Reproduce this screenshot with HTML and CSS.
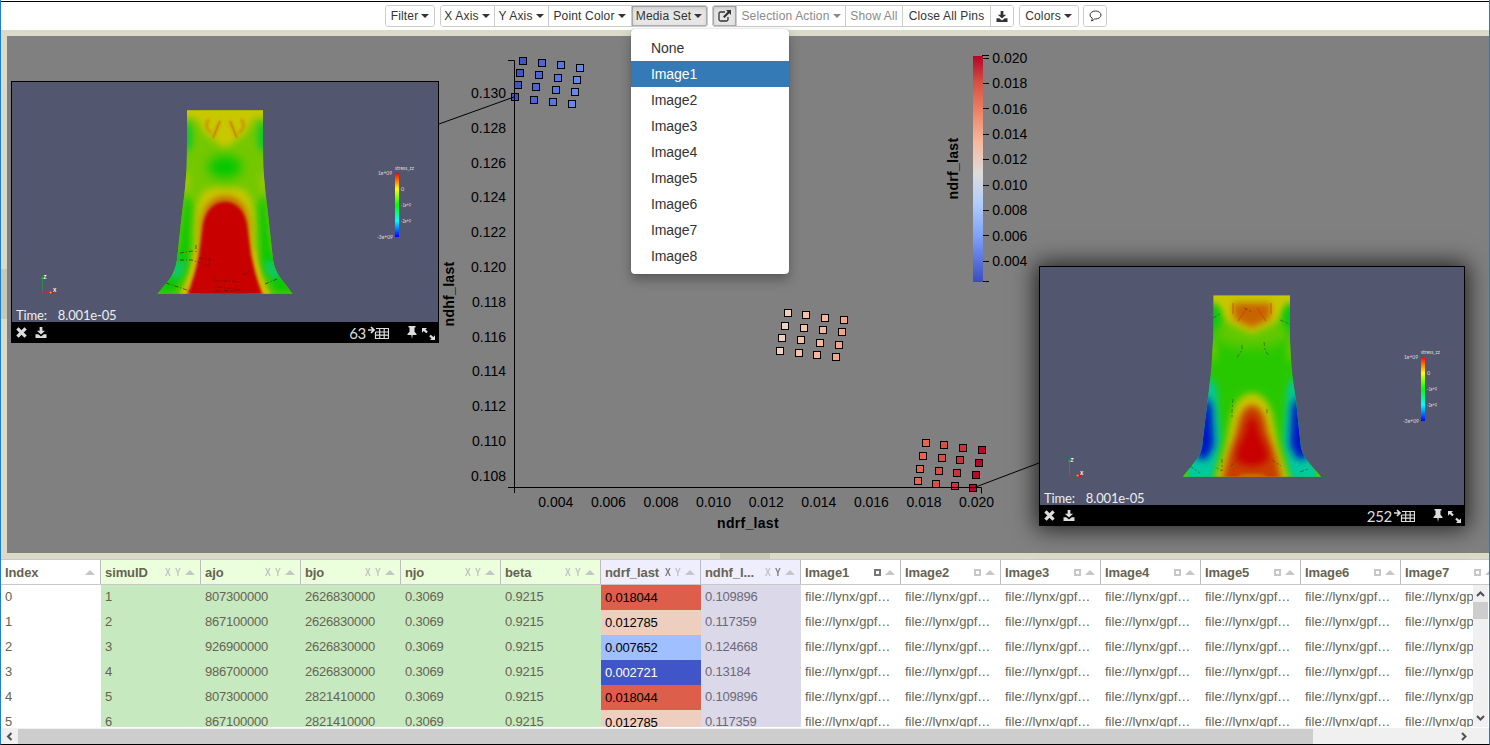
FILE: index.html
```html
<!DOCTYPE html>
<html lang="en">
<head>
<meta charset="utf-8">
<title>Ensemble Explorer</title>
<link rel="stylesheet" href="styles.css">
</head>
<body>
<svg class="defs" width="0" height="0">
  <defs>
    <symbol id="i-download" viewBox="0 0 12 12"><path fill="currentColor" d="M4.500 0h3v4h3L6 8.300 1.500 4h3zM0 8h3l3 2.300L9 8h3v4H0z"/></symbol>
    <symbol id="i-close" viewBox="0 0 10 10"><path d="M1.300 1.300l7.400 7.400M8.700 1.300L1.300 8.700" stroke="currentColor" stroke-width="3"/></symbol>
    <symbol id="i-table" viewBox="0 0 21 13"><path d="M0 4h5M3 1l3 3-3 3" fill="none" stroke="currentColor" stroke-width="1.700"/><path d="M8 2.500h12.500v10H7.500V6M7.500 6h13M7.500 9.200h13M11.700 2.500v10M16.200 2.500v10" fill="none" stroke="currentColor" stroke-width="1.200"/></symbol>
    <symbol id="i-pin" viewBox="0 0 10 13"><path fill="currentColor" d="M1.500 0h7v1.500h-1v4.300L9.500 8v1H5.700L5 13l-.7-4H.5V8l2-2.200V1.500h-1z"/></symbol>
    <symbol id="i-expand" viewBox="0 0 13 12"><path fill="currentColor" d="M0 0h5L3.500 1.500l2.300 2.300-1.500 1.500L1.700 3 0 4.700zM13 12H8l1.500-1.500-2.300-2.300 1.500-1.500L11.300 9 13 7.300z"/></symbol>
    <symbol id="legend" viewBox="0 0 44 76">
      <rect x="20" y="9" width="4" height="64" fill="url(#jet)"/>
      <g class="tiny"><text x="20" y="6" textLength="19" lengthAdjust="spacingAndGlyphs">stress_zz</text><text x="3" y="11" textLength="14" lengthAdjust="spacingAndGlyphs">1e+09</text><text x="26" y="27">0</text><text x="26" y="43" textLength="10" lengthAdjust="spacingAndGlyphs">-1e+9</text><text x="26" y="59" textLength="10" lengthAdjust="spacingAndGlyphs">-2e+9</text><text x="2" y="75" textLength="16" lengthAdjust="spacingAndGlyphs">-3e+09</text></g>
    </symbol>
    <symbol id="triad" viewBox="0 0 18 22">
      <path d="M2.500 4v14" stroke="#2d8b50"/><path d="M2.500 18.500h8" stroke="#a03848"/><path d="M.8 5l1.700-3 1.700 3z" fill="#00c800"/><circle cx="12.500" cy="18.500" r="1.700" fill="#e01010"/><circle cx="10.700" cy="18.500" r="1.100" fill="#dcb400"/>
      <g class="axis-name"><text x="3.500" y="5">Z</text><text x="13" y="18">X</text></g>
    </symbol>
    <linearGradient id="jet" x2="0" y2="1"><stop stop-color="#f00"/><stop offset=".25" stop-color="#ff0"/><stop offset=".5" stop-color="#0f0"/><stop offset=".75" stop-color="#0ff"/><stop offset="1" stop-color="#00f"/></linearGradient>
    <linearGradient id="coolwarm" x2="0" y2="1"><stop stop-color="#b40426"/><stop offset=".12" stop-color="#d65244"/><stop offset=".25" stop-color="#ee8468"/><stop offset=".38" stop-color="#f7b89c"/><stop offset=".52" stop-color="#dddcdc"/><stop offset=".65" stop-color="#b3cdfb"/><stop offset=".8" stop-color="#7da0f9"/><stop offset="1" stop-color="#3b4cc0"/></linearGradient>
    <filter id="b2" x="-50%" y="-50%" width="200%" height="200%"><feGaussianBlur stdDeviation="1.500"/></filter>
    <filter id="b4" x="-50%" y="-50%" width="200%" height="200%"><feGaussianBlur stdDeviation="3.500"/></filter>
    <filter id="b7" x="-60%" y="-60%" width="220%" height="220%"><feGaussianBlur stdDeviation="6"/></filter>
  </defs>
</svg>
<div class="window">
  <header class="toolbar">
    <div class="group"><button class="btn w-filter">Filter<i class="caret"></i></button></div>
    <div class="group">
      <button class="btn w-axis">X Axis<i class="caret"></i></button><button class="btn w-axis">Y Axis<i class="caret"></i></button><button class="btn w-color">Point Color<i class="caret"></i></button><button class="btn w-media active">Media Set<i class="caret"></i></button>
    </div>
    <div class="group">
      <button class="btn w-icon active"><svg width="13" height="12" viewBox="0 0 13 12"><path d="M7 2H2.500Q1 2 1 3.500v6Q1 11 2.500 11h6Q10 11 10 9.500V7" fill="none" stroke="currentColor" stroke-width="1.300"/><path d="M8 0h5v5l-1.700-1.700L6.500 8 5 6.500l4.700-4.800z" fill="currentColor"/></svg></button><button class="btn w-select muted">Selection Action<i class="caret"></i></button><button class="btn w-show muted">Show All</button><button class="btn w-pins">Close All Pins</button><button class="btn w-icon"><svg width="12" height="11"><use href="#i-download"/></svg></button>
    </div>
    <div class="group"><button class="btn w-colors">Colors<i class="caret"></i></button></div>
    <div class="group"><button class="btn w-talk"><svg width="13" height="12" viewBox="0 0 13 12"><path d="M6.500 1C9.600 1 12 2.800 12 5s-2.400 4-5.500 4L5.600 8.900Q4.400 10.500 2.200 10.800 3.300 9.500 3.300 8.200 1 7 1 5C1 2.800 3.400 1 6.500 1z" fill="none" stroke="currentColor"/></svg></button></div>
  </header>
  <nav class="menu"><a>None</a><a class="selected">Image1</a><a>Image2</a><a>Image3</a><a>Image4</a><a>Image5</a><a>Image6</a><a>Image7</a><a>Image8</a></nav>

  <main class="workspace">
    <div class="gutter"><i class="grip"></i></div>
    <section class="plot">
      <svg id="chart" class="chart" viewBox="7 36 1482 517"></svg>

      <article class="card card-a">
        <svg class="scene" viewBox="12 82 426 240">
          <clipPath id="shapeA"><path d="M187 110.500H263V140Q263 170 265 188Q270 230 273 260Q275 272 282 280L292.500 293.700H157.500L169 280Q175 272 177 260Q181 220 185 188Q187 170 187 140Z"/></clipPath>
          <g clip-path="url(#shapeA)">
            <path d="M150 100h150v200H150z" fill="#74c800"/>
            <path d="M176 90h98v28h-20l-9 16-20 15-20-15-9-16h-20z" fill="#c8c800" filter="url(#b4)"/>
            <g fill="#00c832" filter="url(#b4)"><ellipse cx="187" cy="137" rx="5" ry="15"/><ellipse cx="263" cy="137" rx="5" ry="15"/></g>
            <ellipse cx="225" cy="167" rx="17" ry="11" fill="#00c800" filter="url(#b7)"/>
            <g fill="#a0c800" filter="url(#b4)"><ellipse cx="185" cy="182" rx="5" ry="10"/><ellipse cx="265" cy="182" rx="5" ry="10"/></g>
            <g fill="#08c800" filter="url(#b4)"><path d="M185 196L192 204 190 260 176 294H150L178 250z"/><path d="M265 196L258 204 260 260 274 294H300L272 250z"/></g>
            <g fill="#10c87a" filter="url(#b4)"><ellipse cx="178" cy="270" rx="5" ry="11" transform="rotate(28 178 270)"/><ellipse cx="272" cy="270" rx="5" ry="11" transform="rotate(-28 272 270)"/></g>
            <path d="M194 300L196 215Q198 190 212 188H238Q252 190 254 215L256 300z" fill="#c8c800" filter="url(#b4)"/>
            <path d="M194 250Q192 276 176 300H274Q258 276 256 250z" fill="#c8bc00" filter="url(#b2)"/>
            <path d="M201 300V224Q204 197 225 196Q246 197 249 224V300z" fill="#c86400" filter="url(#b4)"/>
            <path d="M199 255L203 225Q207 203 225 202Q243 203 247 225L251 255Q255 275 263 296H187Q195 275 199 255z" fill="#c80000" filter="url(#b2)"/>
            <path d="M186 110.500h78" stroke="#c8be00"/>
            <g fill="none" stroke="#c88200" stroke-width="2" filter="url(#b2)"><path d="M220 121l-7 17M230 121l7 17M209 119q-6 7 2 14M241 119q6 7-2 14"/></g>
            <g fill="none" stroke="#c87800" stroke-width="1" opacity=".75"><path d="M220 121l-7 17M230 121l7 17"/></g>
          </g>
          <g fill="none" stroke="#5c1500" stroke-width=".7" stroke-dasharray="4 2 1 2"><path d="M180 253l13-2M180 260h12l8 3M196 245v7M199 258l11 1v6h-7M166 283l24 8M214 280l25 2M218 287l24 3M243 275l8-5M265 284l12-5M215 291l28-1"/></g>
          <use href="#legend" x="375" y="164" width="44" height="76"/><use href="#triad" x="40" y="274" width="18" height="22"/>
        </svg>
        <div class="stamp"><span>Time:</span><span>8.001e-05</span></div>
        <footer class="bar"><svg width="11" height="11"><use href="#i-close"/></svg><svg width="12" height="11"><use href="#i-download"/></svg><b class="count">63</b><svg class="tbl" width="21" height="13"><use href="#i-table"/></svg><svg class="pin" width="10" height="13"><use href="#i-pin"/></svg><svg width="13" height="12"><use href="#i-expand"/></svg></footer>
      </article>

      <article class="card card-b">
        <svg class="scene" viewBox="1040 267 424 238">
          <clipPath id="shapeB"><path d="M1213.500 295.500H1290V340Q1291 372 1296 400Q1299 430 1301 448Q1303 456 1310 464L1321 476.700H1183L1193 464Q1200 456 1202 448Q1205 420 1209 390Q1213 355 1213.500 325Z"/></clipPath>
          <g clip-path="url(#shapeB)">
            <path d="M1170 290h160v200H1170z" fill="#28c800"/>
            <ellipse cx="1252" cy="332" rx="38" ry="16" fill="#64c800" filter="url(#b7)"/>
            <path d="M1200 276h105v28h-19l-8 18-26 12-26-12-8-18h-18z" fill="#c8c800" filter="url(#b4)"/>
            <path d="M1233 303h38l-1 16-18 9-18-9z" fill="#c86400" filter="url(#b4)"/>
            <g fill="#00c81e" filter="url(#b4)"><ellipse cx="1213" cy="318" rx="5" ry="12"/><ellipse cx="1290" cy="318" rx="5" ry="12"/></g>
            <g fill="#70c800" filter="url(#b4)"><ellipse cx="1213" cy="350" rx="4" ry="12"/><ellipse cx="1291" cy="350" rx="4" ry="12"/></g>
            <g fill="#00c8a0" filter="url(#b4)"><path d="M1208 376L1216 385 1221 440 1213 484H1175L1190 460z"/><path d="M1296 376L1288 385 1283 440 1291 484H1329L1312 460z"/></g>
            <g fill="#0014c8" filter="url(#b4)"><path d="M1206 395l6 12 2 38-7 14h-10v-20z"/><path d="M1298 395l-6 12-2 38 7 14h10v-20z"/></g>
            <g fill="#58c800" filter="url(#b2)"><path d="M1188 464l-12 15h12zM1316 464l12 15h-12z"/></g>
            <path d="M1252 393Q1236 394 1231 418L1225 448 1214 482H1290L1279 448 1273 418Q1268 394 1252 393z" fill="#c8c800" filter="url(#b4)"/>
            <path d="M1252 405Q1240 407 1237 430L1227 460 1220 490H1284L1277 460 1267 430Q1264 407 1252 405z" fill="#c83c00" filter="url(#b4)"/>
            <path d="M1252 416Q1256 418 1260 436Q1272 455 1266 462Q1252 470 1238 462Q1232 455 1244 436Q1248 418 1252 416z" fill="#c80000" filter="url(#b4)"/>
            <ellipse cx="1252" cy="476" rx="14" ry="2" fill="#c87800" filter="url(#b2)"/>
            <g fill="none" stroke="#c84600" stroke-width="1.200" opacity=".7"><path d="M1247 308l-9 13M1257 308l9 13M1233 303v11M1271 303v11"/></g>
          </g>
          <g fill="none" stroke="#304000" stroke-width=".7" stroke-dasharray="4 2 2 2" opacity=".8"><path d="M1242 345v5l-6 9M1264 342l1 8 4 6M1213 318l7-4M1280 320l10 4M1233 399l-1 12v8M1267 409v6M1222 459v12l-7-4M1231 466l8-8M1272 460l9 6M1190 466l10 7M1300 472l8-3M1244 308l8 4"/></g>
          <use href="#legend" x="1401" y="348" width="44" height="76"/><use href="#triad" x="1067" y="457" width="18" height="22"/>
        </svg>
        <div class="stamp"><span>Time:</span><span>8.001e-05</span></div>
        <footer class="bar"><svg width="11" height="11"><use href="#i-close"/></svg><svg width="12" height="11"><use href="#i-download"/></svg><b class="count">252</b><svg class="tbl" width="21" height="13"><use href="#i-table"/></svg><svg class="pin" width="10" height="13"><use href="#i-pin"/></svg><svg width="13" height="12"><use href="#i-expand"/></svg></footer>
      </article>
    </section>
  </main>
  <div class="splitter"><i class="grip"></i></div>

  <section class="grid">
    <div id="head" class="row head"></div>
    <div class="scroller">
      <div id="rows" class="rows"></div>
      <div class="vbar"><svg width="15" height="17" viewBox="0 0 15 17"><path d="M4 11l3.500-3.500L11 11" class="arrow"/></svg><i class="vthumb"></i><svg class="down" width="15" height="17" viewBox="0 0 15 17"><path d="M4 6l3.500 3.500L11 6" class="arrow"/></svg></div>
    </div>
    <div class="hbar"><svg width="17" height="15" viewBox="0 0 17 15"><path d="M10.500 4L7 7.500l3.500 3.500" class="arrow"/></svg><i class="hthumb"></i><svg class="right" width="17" height="15" viewBox="0 0 17 15"><path d="M6 4l3.500 3.500L6 11" class="arrow"/></svg></div>
  </section>
</div>
<script src="script.js"></script>
</body>
</html>
```

FILE: styles.css
```css
* { box-sizing: border-box; }
body { margin: 0; background: #fff; font-family: "Liberation Sans", Arial, sans-serif; color: #333; overflow: hidden; }
.defs { position: absolute; }
.window { position: relative; width: 1490px; height: 745px; display: flex; flex-direction: column; border-left: 1px solid #1c7fd6; border-right: 1px solid #1c7fd6; border-bottom: 1px solid #000; }

.toolbar { height: 30px; flex: none; display: flex; gap: 4.500px; padding: 3px 0 0 384px; margin-top: 1px; margin-bottom: -1px; border-top: 1px solid #000; }
.group { display: flex; flex: none; height: 22px; border: 1px solid #ccc; border-radius: 3px; overflow: hidden; }
.btn { display: flex; flex: none; align-items: center; justify-content: center; height: 20px; padding: 0; border: 0; border-left: 1px solid #ccc; background: #fff; color: #333; font: 12px "Liberation Sans", Arial, sans-serif; letter-spacing: .17px; white-space: nowrap; }
.btn:first-child { border-left: 0; }
.btn.active { background: #e6e6e6; box-shadow: inset 0 2px 4px rgba(0,0,0,.14), inset 0 0 0 1px #b4b4b4; }
.btn.muted { color: #8a8a8a; }
.caret { margin-left: 3px; border: 4px solid transparent; border-top-color: currentColor; border-bottom: 0; }
.w-filter { width: 48px; }
.w-axis { width: 54px; }
.w-axis:first-child { width: 53px; }
.w-color { width: 83px; }
.w-media { width: 76px; }
.w-icon { width: 23px; }
.w-talk { width: 22px; }
.w-select { width: 109px; }
.w-show { width: 57px; }
.w-pins { width: 88px; }
.w-colors { width: 58px; }

.menu { position: absolute; z-index: 5; left: 630px; top: 29px; width: 158px; height: 245px; padding: 6px 0; background: #fff; border-radius: 4px; box-shadow: 0 0 1px rgba(0,0,0,.4), 0 6px 12px rgba(0,0,0,.3); }
.menu a { display: block; height: 26px; padding-left: 20px; font-size: 14px; line-height: 26px; letter-spacing: -.1px; }
.menu .selected { background: #337ab7; color: #fff; }

.workspace { display: flex; height: 523px; flex: none; border-top: 6px solid #dadac8; }
.gutter { width: 6px; background: #dadac8; padding-top: 233px; }
.gutter .grip { display: block; height: 50px; background: #c8c8b6; }
.splitter { height: 6px; flex: none; background: #dadac8; }
.splitter .grip { display: block; width: 50px; height: 6px; margin-left: 719px; background: #c8c8b6; }
.plot { position: relative; flex: 1; background: #808080; }
.chart { display: block; width: 1482px; height: 517px; font-size: 14px; }
.chart text { fill: #000; }
.chart .title { font-weight: bold; letter-spacing: .3px; text-anchor: middle; }
.chart .line { stroke: #000; fill: none; }

.card { position: absolute; border: 1px solid #000; background: #52566e; }
.card-a { left: 4px; top: 45px; width: 428px; height: 262px; }
.card-b { left: 1032px; top: 230px; width: 426px; height: 260px; box-shadow: 0 0 22px 3px rgba(0,0,0,.75); }
.scene { display: block; width: 100%; height: calc(100% - 20px); }
.stamp { position: absolute; left: 4px; bottom: 19px; display: flex; gap: 11px; color: #eee; font: 13px/15px "Century Gothic", "URW Gothic", Lato, sans-serif; letter-spacing: -.15px; }
.bar { display: flex; align-items: center; height: 20px; padding: 1px 4px 0; background: #000; color: #ddd; }
.bar svg { flex: none; }
.bar svg:nth-child(2) { margin-left: 8px; }
.count { margin-left: auto; font: 15px "Century Gothic", "URW Gothic", Lato, sans-serif; letter-spacing: -.3px; }
.tbl { margin: 0 18px 0 2px; }
.pin { margin-right: 5px; }
.bar svg:last-child { margin-right: -1px; margin-top: 2px; }
.tiny { font-family: Lato, sans-serif; font-size: 5.500px; fill: #ddd; }
.axis-name { font-size: 5px; font-weight: bold; fill: #fff; }

.grid { width: 1488px; overflow: hidden; border-top: 1px solid #c8c8c8; font-size: 13px; letter-spacing: -.22px; color: #666352; }
.row { display: flex; }
.head { height: 25px; border-bottom: 1px solid #c8c8c8; width: 1500px; }
.th { flex: none; width: 100px; display: flex; align-items: center; padding: 0 5px 0 4px; border-right: 1px solid #bdbdbd; font-weight: bold; letter-spacing: -.1px; }
.th .name { margin-right: auto; }
.th.param { background: #ecffdc; }
.th.result { background: #eeeeff; }
.axis { font-size: 10px; width: 6px; margin-right: 4px; color: #c2c2c2; letter-spacing: 0; transform: scaleX(.86); transform-origin: left; }
.axis.on { color: #777; }
.box { width: 7px; height: 7px; border: 2px solid #c6c6c6; margin-right: 4px; }
.box.on { border-color: #777; }
.up { border: 5px solid transparent; border-top: 0; border-bottom: 5px solid #c6c6c6; }
.scroller { display: flex; height: 143px; border-bottom: 1px solid #fff; }
.rows { width: 1472px; overflow: hidden; }
.td { flex: none; width: 100px; height: 25px; padding-left: 4px; line-height: 23px; white-space: nowrap; }
.td.param { background: #c7e9c0; }
.td.result { background: #dbd8ea; color: #6c6976; }
.td.link { letter-spacing: 0; }
.td.heat { line-height: 25px; color: #000; }
.td.hot { background: #dd5f4b; }
.td.warm { background: #eecfbf; }
.td.cool { background: #9fbfff; }
.td.cold { background: #4055c8; color: #fff; }
.vbar { width: 15px; height: 142px; background: #f0f0f0; display: flex; flex-direction: column; }
.vthumb { height: 17px; background: #cdcdcd; flex: none; }
.down { margin-top: auto; }
.hbar { height: 16px; background: #f0f0f0; display: flex; align-items: center; }
.hthumb { width: 1295px; height: 15px; background: #cdcdcd; }
.right { margin-left: auto; margin-right: 16px; }
.arrow { fill: none; stroke: #505050; stroke-width: 2; }
```

FILE: script.js
```javascript
const clusters = [
  { colors: ['#4055c8', '#4a65d6', '#5577e4', '#6488ec'],
    points: [[523,61],[542,63],[561,65],[580,68],[520,73],[539,75],[558,78],[577,80],[518,85],[536,87],[556,90],[575,92],[515,97],[534,100],[553,102],[572,104]] },
  { colors: ['#f0cfc0', '#f5c1a8', '#f6b79c', '#f4a487'],
    points: [[788,313],[806,315],[825,318],[844,320],[785,326],[804,328],[823,330],[842,332],[782,338],[801,340],[820,343],[839,345],[780,351],[799,353],[817,355],[836,357]] },
  { colors: ['#e6654f', '#d94f42', '#c8343a', '#b40c28'],
    points: [[926,443],[944,445],[963,448],[982,450],[923,456],[942,458],[960,460],[979,463],[920,469],[939,471],[957,473],[976,475],[918,481],[936,484],[955,486],[973,488]] }
];
let chart = '';
for (const c of clusters) {
  c.points.forEach(([x, y], i) => {
    chart += `<rect x="${x - 3.5}" y="${y - 3.5}" width="7" height="7" fill="${c.colors[i % 4]}" stroke="#000"/>`;
  });
}
chart += '<path class="line" d="M508 60.5H514.5V493M508 487.5H981.5V493.500"/><path class="line" d="M439 124L514 97M973 488L1039 463"/>';
for (let i = 0; i < 12; i++) {
  chart += `<text x="506" y="${98 + i * 34.8}" text-anchor="end">${(0.130 - i * 0.002).toFixed(3)}</text>`;
}
for (let i = 0; i < 9; i++) {
  const value = (0.004 + i * 0.002).toFixed(3);
  const y = 261.3 - i * 25.4;
  chart += `<text x="${555.8 + i * 52.6}" y="507" text-anchor="middle">${value}</text>`;
  chart += `<text x="992.3" y="${y + 4.6}">${value}</text><path class="line" d="M983 ${Math.floor(y) + .5}h6"/>`;
}
chart += '<path class="line" d="M982 55.500h7M983 281.500h6"/><rect x="973" y="56" width="10" height="226" fill="url(#coolwarm)"/>';
chart += '<text class="title" x="748" y="528">ndrf_last</text><text class="title" transform="translate(454 294) rotate(-90)">ndhf_last</text><text class="title" transform="translate(958 168.500) rotate(-90)">ndrf_last</text>';
document.getElementById('chart').innerHTML = chart;

const columns = ['Index', 'simuID', 'ajo', 'bjo', 'njo', 'beta', 'ndrf_last', 'ndhf_l...', 'Image1', 'Image2', 'Image3', 'Image4', 'Image5', 'Image6', 'Image7'];
const kind = i => i === 0 ? '' : i < 6 ? 'param' : i < 8 ? 'result' : 'link';
document.getElementById('head').innerHTML = columns.map((name, i) => {
  let tools = '';
  if (i > 7) tools = `<i class="box ${i === 8 ? 'on' : ''}"></i>`;
  else if (i > 0) tools = `<span class="axis ${i === 6 ? 'on' : ''}">X</span><span class="axis ${i === 7 ? 'on' : ''}">Y</span>`;
  return `<div class="th ${kind(i)}"><span class="name">${name}</span>${tools}<i class="up"></i></div>`;
}).join('');

const data = [
  ['807300000', '2626830000', '0.018044', '0.109896', 'hot'],
  ['867100000', '2626830000', '0.012785', '0.117359', 'warm'],
  ['926900000', '2626830000', '0.007652', '0.124668', 'cool'],
  ['986700000', '2626830000', '0.002721', '0.13184', 'cold'],
  ['807300000', '2821410000', '0.018044', '0.109896', 'hot'],
  ['867100000', '2821410000', '0.012785', '0.117359', 'warm']
];
document.getElementById('rows').innerHTML = data.map(([ajo, bjo, ndrf, ndhf, heat], r) => {
  const cells = [r, r + 1, ajo, bjo, '0.3069', '0.9215', ndrf, ndhf].concat(Array(7).fill('file://lynx/gpf…'));
  return '<div class="row">' + cells.map((v, i) => `<div class="td ${i === 6 ? 'heat ' + heat : kind(i)}">${v}</div>`).join('') + '</div>';
}).join('');
```
